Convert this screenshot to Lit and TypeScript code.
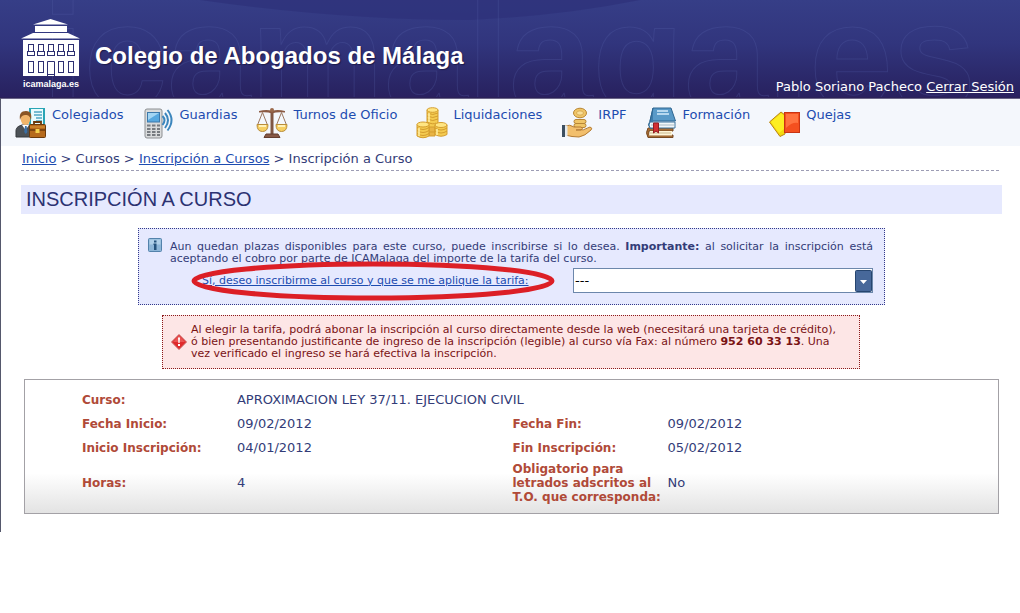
import { LitElement, html, css, svg } from "lit";
import { customElement, state } from "lit/decorators.js";

const icons = {
  colegiados: svg`
    <path d="M14 1h16v23H14z" fill="#2aa5b5"/><path d="M16 2h12v21H16z" fill="#e9fbfd"/>
    <path d="M19 5h8M19 8h8M21 11h6M21 14h6" stroke="#4fa8c4" stroke-width="1.5"/>
    <path d="M1 30v-6c0-4 3-5 6-6h6c4 1 6 3 6 6v6z" fill="#4c5257" stroke="#34383c"/>
    <path d="M7 18l3.500 5 3.500-5z" fill="#fff"/><path d="M10 19h1.600l.8 6-1.600 2-1.600-2z" fill="#3a6fa5"/>
    <ellipse cx="10.500" cy="12" rx="4.800" ry="6" fill="#f0b469"/>
    <path d="M5 13c-1-6 1-9 6-9s6 4 5 9c-1-4-3-5-5-5-3 0-5 1-6 5z" fill="#8a5524"/>
    <path d="M19 18v-3h7v3" fill="none" stroke="#6b3a0c" stroke-width="1.800"/>
    <rect x="14.500" y="17.500" width="16" height="13" rx="1" fill="#b66a1c" stroke="#6b3a0c"/>
    <path d="M15 23h15" stroke="#6b3a0c" stroke-width="1.500"/><path d="M15 20h15" stroke="#dd9a3d"/>
    <rect x="20.500" y="22" width="4" height="4" fill="#f4d04c"/>`,
  guardias: svg`
    <path d="M3 4q0-2 2-2h13q2 0 2 2v25q0 2-2 2H5q-2 0-2-2z" fill="#d9dbdc" stroke="#8c8f92"/>
    <rect x="5.500" y="5.500" width="12" height="9.500" fill="#57a8df" stroke="#3d79ab"/>
    <path d="M6 6h11L6 13z" fill="#a3d5f3"/>
    <path d="M5 18.500h3.500M10 18.500h3.500M15 18.500h3M5 22h3.500M10 22h3.500M15 22h3M5 25h3.500M10 25h3.500M15 25h3M5 28h3.500M10 28h3.500M15 28h3" stroke="#777b80" stroke-width="2"/>
    <path d="M20.500 9q4 4 0 9M23 6q6 7 0 15M25.500 3q8 10 0 20.500" fill="none" stroke="#3b86bd" stroke-width="2"/>`,
  turnos: svg`
    <path d="M14.500 3h3v24h-3z" fill="#805643"/><path d="M3 4q8-2 13 0 5-2 13 0v1.500q-8-1-13 1-5-2-13-1z" fill="#8b5a43"/>
    <circle cx="16" cy="3" r="2" fill="#9b6a4c"/>
    <path d="M6.500 5.500L1.500 18h10zM25.500 5.500l-5 12.500h10z" fill="none" stroke="#9b7761"/>
    <path d="M1 17.500h11q0 7-5.500 7T1 17.500zM20 17.500h11q0 7-5.500 7t-5.500-7z" fill="#f6cf63" stroke="#b98d3a"/>
    <path d="M3 19h7M22 19h7" stroke="#fff1b8" stroke-width="2"/>
    <path d="M10 27h12l2 3.500H8z" fill="#875845" stroke="#643d2e"/>`,
  liquidaciones: svg`
    <g fill="#f4cb50" stroke="#d49d2e">
      <path d="M11 3v18h11V3z"/><ellipse cx="16.500" cy="3" rx="5.500" ry="2.300" fill="#ffe582"/>
      <path d="M13 20h6v9h-6z" fill="#e8b445"/>
      <path d="M1 17.500v11.500q6 3.500 12 0V17.500z"/><ellipse cx="7" cy="17.500" rx="6" ry="2.500" fill="#ffe582"/>
      <path d="M19 18v9.500q6 3.500 12 0V18z"/><ellipse cx="25" cy="18" rx="6" ry="2.500" fill="#ffe582"/>
      <path d="M11 6q6 3 11 0M11 9q6 3 11 0M11 12q6 3 11 0M11 15q6 3 9 1M1 20.500q6 4 12 0M1 23.500q6 4 12 0M1 26.500q6 4 12 0M19 21q6 4 12 0M19 24q6 4 12 0M13 25h6" fill="none"/>
    </g>
    <path d="M3 21v8M21 22v6M13 6v9" stroke="#fff0a4" stroke-width="1.500"/>`,
  irpf: svg`
    <g fill="#f0c567" stroke="#b88635">
      <ellipse cx="19" cy="6" rx="6.500" ry="4.800"/><ellipse cx="19" cy="6" rx="3.500" ry="2.200" fill="#f9df98" stroke="#d9aa50"/>
      <rect x="13" y="12.500" width="12" height="4" rx="2"/><rect x="13" y="16.500" width="12" height="4" rx="2"/>
    </g>
    <path d="M4 19q5-2 9 1h7q3 1 0 3h-5q8 1 14-3 3 1 1 3-6 6-12 7-7 0-14-2z" fill="#f2bf6d" stroke="#b47b33"/>
    <path d="M1 18h3v12H1z" fill="#3c4f61"/><path d="M4 18.500h2.500v10.500H4z" fill="#e4e9ed"/>`,
  formacion: svg`
    <path d="M3 21h25v3H4v4h24v2.500H3q-3-5 0-9.500z" fill="#a66c34" stroke="#774a22"/>
    <path d="M5 24h22v4.500H4z" fill="#fff6d8"/><path d="M5 26h21" stroke="#c9b991"/>
    <path d="M8 1h18l4.500 13H5z" fill="#5a9ac8" stroke="#2f6691"/><path d="M12 4h11M12 7h12" stroke="#d6edfb" stroke-width="1.500"/>
    <path d="M8 1L5 14q-3 4 0 7h3" fill="#3e7cab" stroke="#2f6691"/>
    <path d="M5 15h25v6H5q-2-3 0-6z" fill="#f2f7f9" stroke="#3c749e"/><path d="M6 18h23" stroke="#a9bac5"/>
    <path d="M8.500 16h5v10l-2.500-2-2.500 2z" fill="#d22f32" stroke="#941d22"/>`,
  quejas: svg`
    <path d="M.5 15L12 5l4 3v19l-5 2.500z" fill="#f4d80e" stroke="#b98413"/><path d="M2 15L12 6.500l3 2V22l-5 4z" fill="#fdee22"/>
    <rect x="15.500" y="5.500" width="15" height="20" fill="#f4501f" stroke="#c83413"/><path d="M17 7h12v9q-6-1-12 5z" fill="#ff7440"/>`,
};

const menu = [
  { label: "Colegiados", icon: icons.colegiados },
  { label: "Guardias", icon: icons.guardias },
  { label: "Turnos de Oficio", icon: icons.turnos },
  { label: "Liquidaciones", icon: icons.liquidaciones },
  { label: "IRPF", icon: icons.irpf },
  { label: "Formación", icon: icons.formacion },
  { label: "Quejas", icon: icons.quejas },
];

@customElement("site-header")
class SiteHeader extends LitElement {
  static styles = css`
    :host { display: block; }
    .bar {
      position: relative;
      overflow: hidden;
      display: flex;
      justify-content: space-between;
      height: 98px;
      box-sizing: border-box;
      padding: 18px 6px 2px 21px;
      background: linear-gradient(#363e87, #31357d 45%, #292463 92%, #2a2060);
      border-bottom: 1px solid #2a2058;
      color: #fff;
    }
    .backdrop { position: absolute; left: 0; top: 0; width: 1020px; height: 98px; }
    .brand { position: relative; display: flex; gap: 14px; }
    .logo { display: flex; flex-direction: column; align-items: center; width: 60px; }
    .house { display: block; width: 60px; height: 59px; }
    .domain { font: bold 9px/14px "Liberation Sans", Arial, sans-serif; }
    .name {
      margin: 0;
      padding-top: 23px;
      font: bold 24px/30px "Liberation Sans", Arial, sans-serif;
      text-shadow: 1px 1px 1px #1c1a4c;
    }
    .user { position: relative; align-self: flex-end; font: 13px/16px "DejaVu Sans", Verdana, sans-serif; }
    .user a { color: #fff; }
  `;
  render() {
    return html`
      <header class="bar">
        <svg class="backdrop" viewBox="0 0 1020 98" aria-hidden="true">
          <path d="M200 0Q340 20 470 20Q560 16 640 0z" fill="#2d3179" opacity=".7"/>
          <text x="42" y="108" font-family="Liberation Sans, Arial, sans-serif" font-weight="bold" font-size="150"
            fill="none" stroke="#5560a8" stroke-opacity=".28">icamalaga.es</text>
        </svg>
        <div class="brand">
          <div class="logo">
            <svg class="house" viewBox="0 0 60 59" role="img" aria-label="Sede del colegio">
              <path d="M12 6.500L29.500 1 47 6.500zM14 8h32v6H14zM0 20.500L12 15h35l12 5.500zM2 22h56v36H2z" fill="#fff"/>
              <g fill="#fff" stroke="#2d2f72">
                ${[7, 17, 27, 37, 47].map((x) => svg`
                  <rect x=${x + 0.5} y="26.500" width="5" height="9"/>
                  <rect x=${x - 0.5} y="33.500" width="7" height="4"/>`)}
                ${[7, 17, 37, 47].map((x) => svg`<rect x=${x + 0.5} y="43.500" width="5" height="11"/>`)}
                <path d="M26.500 58V43.500h7V58M26.500 56.500h7"/>
              </g>
            </svg>
            <span class="domain">icamalaga.es</span>
          </div>
          <h1 class="name">Colegio de Abogados de Málaga</h1>
        </div>
        <div class="user">Pablo Soriano Pacheco <a href="#salir">Cerrar Sesión</a></div>
      </header>`;
  }
}

@customElement("main-menu")
class MainMenu extends LitElement {
  static styles = css`
    :host { display: block; }
    .menu {
      display: flex;
      gap: 19px;
      padding: 8px 14px 7px;
      background: #f4f7fc;
      border-top: 1px solid #6a6488;
      font: 13px/16px "DejaVu Sans", Verdana, sans-serif;
    }
    .item { display: flex; gap: 5px; color: #1d4cb0; text-decoration: none; white-space: nowrap; }
    .icon { width: 32px; height: 32px; }
  `;
  render() {
    return html`<nav class="menu">
      ${menu.map((m) => html`<a class="item" href="#menu">
        <svg class="icon" viewBox="0 0 32 32" aria-hidden="true">${m.icon}</svg><span>${m.label}</span></a>`)}
    </nav>`;
  }
}

@customElement("course-details")
class CourseDetails extends LitElement {
  static styles = css`
    :host { display: block; }
    .card {
      padding: 8px 56px 7px;
      border: 1px solid #a3a1a6;
      background: linear-gradient(#fff 70%, #e3e3e3);
    }
    .data { width: 100%; table-layout: fixed; border-collapse: collapse; font-size: 13px; line-height: 14px; }
    .names { width: 18%; }
    .values { width: 32%; }
    .data th { padding: 5px 1px; text-align: left; font-size: 12px; color: #b04a38; }
    .data td { padding: 5px 1px; color: #333c78; }
    .data .last th, .data .last td { padding: 2px 1px; }
  `;
  render() {
    return html`<section class="card"><table class="data">
      <colgroup><col class="names"><col class="values"><col class="names"><col class="values"></colgroup>
      <tr><th scope="row">Curso:</th><td colspan="3">APROXIMACION LEY 37/11. EJECUCION CIVIL</td></tr>
      <tr><th scope="row">Fecha Inicio:</th><td>09/02/2012</td><th scope="row">Fecha Fin:</th><td>09/02/2012</td></tr>
      <tr><th scope="row">Inicio Inscripción:</th><td>04/01/2012</td><th scope="row">Fin Inscripción:</th><td>05/02/2012</td></tr>
      <tr class="last"><th scope="row">Horas:</th><td>4</td><th scope="row">Obligatorio para letrados adscritos al T.O. que corresponda:</th><td>No</td></tr>
    </table></section>`;
  }
}

@customElement("app-root")
class AppRoot extends LitElement {
  @state() rate = "";

  static styles = css`
    :host { display: block; background: #fff; font: 13px/16px "DejaVu Sans", Verdana, sans-serif; color: #333c78; }
    .page { padding-bottom: 18px; border-left: 1px solid #55586c; }
    a { color: #1d4cb0; }
    .crumbs { margin: 0 21px 0 20px; padding: 5px 1px 3px; border-bottom: 1px dashed #9c9cb4; }
    .heading {
      margin: 14px 18px 0 20px;
      padding: 2px 5px 3px;
      background: #e6e9fe;
      font: 20px/24px "Liberation Sans", Arial, sans-serif;
      color: #2c3272;
    }
    .info {
      position: relative;
      margin: 14px 135px 0 137px;
      padding: 9px 11px 11px 9px;
      border: 1px dotted #33398a;
      background: #e6e9fe;
      display: grid;
      grid-template-columns: 14px 1fr;
      column-gap: 8px;
      font-size: 11px;
      line-height: 12px;
    }
    .mark { width: 14px; height: 14px; }
    .note { margin: 0; padding-top: 3px; text-align: justify; }
    .rate { grid-column: 2; display: flex; justify-content: space-between; align-items: center; padding-top: 3px; }
    .apply { padding-left: 32px; color: #1d4cb0; text-decoration: underline; }
    .picker { display: grid; width: 300px; }
    .choice {
      grid-area: 1 / 1;
      appearance: none;
      width: 100%;
      height: 25px;
      box-sizing: border-box;
      padding: 0 20px 0 1px;
      border: 1px solid #6c87ab;
      border-radius: 0;
      background: #fff;
      color: #000;
      font: 13px/16px "DejaVu Sans", Verdana, sans-serif;
    }
    .arrow { grid-area: 1 / 1; justify-self: end; align-self: center; width: 18px; height: 22px; pointer-events: none; }
    .ring { position: absolute; left: 52px; top: 31px; width: 364px; height: 42px; pointer-events: none; }
    .warning {
      margin: 10px 160px 0 161px;
      padding: 8px 16px 8px 8px;
      border: 1px dotted #8c1a1a;
      background: #fde6e6;
      display: flex;
      align-items: center;
      gap: 4px;
      font-size: 11px;
      line-height: 12px;
      color: #7a1214;
    }
    .alert { flex: none; width: 16px; height: 16px; }
    .warning p { margin: 0; }
    .details { display: block; margin: 10px 21px 0 23px; }
  `;

  render() {
    return html`
      <site-header></site-header>
      <div class="page">
        <main-menu></main-menu>
        <nav class="crumbs">
          <a href="#inicio">Inicio</a> &gt; Cursos &gt; <a href="#cursos">Inscripción a Cursos</a> &gt; Inscripción a Curso
        </nav>
        <h2 class="heading">INSCRIPCIÓN A CURSO</h2>
        <section class="info">
          <svg class="mark" viewBox="0 0 14 14" aria-hidden="true">
            <rect x=".5" y=".5" width="13" height="13" rx="1" fill="#8db6d8" stroke="#5382ab"/>
            <path d="M1.500 1.500h11v5h-11z" fill="#afd0e9"/>
            <path d="M6 2.500h2.500v2H6zM5.500 5.500h3V12H6V7h-.5z" fill="#24527c"/>
          </svg>
          <p class="note">Aun quedan plazas disponibles para este curso, puede inscribirse si lo desea.
            <b>Importante:</b> al solicitar la inscripción está aceptando el cobro por parte de ICAMalaga del importe de la tarifa del curso.</p>
          <div class="rate">
            <label class="apply" for="tarifa">Sí, deseo inscribirme al curso y que se me aplique la tarifa:</label>
            <div class="picker">
              <select class="choice" id="tarifa" .value=${this.rate}
                @change=${(e: Event) => (this.rate = (e.target as HTMLSelectElement).value)}>
                <option value="">---</option>
              </select>
              <svg class="arrow" viewBox="0 0 18 22" aria-hidden="true">
                <rect x=".5" y=".5" width="16" height="21" rx="1" fill="#47689a" stroke="#26456f"/>
                <path d="M5 10h7l-3.500 4z" fill="#fff"/>
              </svg>
            </div>
          </div>
          <svg class="ring" viewBox="0 0 364 42" aria-hidden="true">
            <ellipse cx="182" cy="21" rx="179" ry="17" fill="none" stroke="#dc1f26" stroke-width="5"/>
          </svg>
        </section>
        <section class="warning">
          <svg class="alert" viewBox="0 0 16 16" aria-hidden="true">
            <path d="M8 .5L15.500 8 8 15.500.5 8z" fill="#e02a2c" stroke="#c96060"/>
            <path d="M8 1.500L14 8H2z" fill="#ea5453"/>
            <path d="M7 3.500h2l-.4 5.500H7.400zM7 10h2v2H7z" fill="#fff"/>
          </svg>
          <p>Al elegir la tarifa, podrá abonar la inscripción al curso directamente desde la web (necesitará una tarjeta de crédito),
            ó bien presentando justificante de ingreso de la inscripción (legible) al curso vía Fax: al número <b>952 60 33 13</b>. Una
            vez verificado el ingreso se hará efectiva la inscripción.</p>
        </section>
        <course-details class="details"></course-details>
      </div>`;
  }
}
